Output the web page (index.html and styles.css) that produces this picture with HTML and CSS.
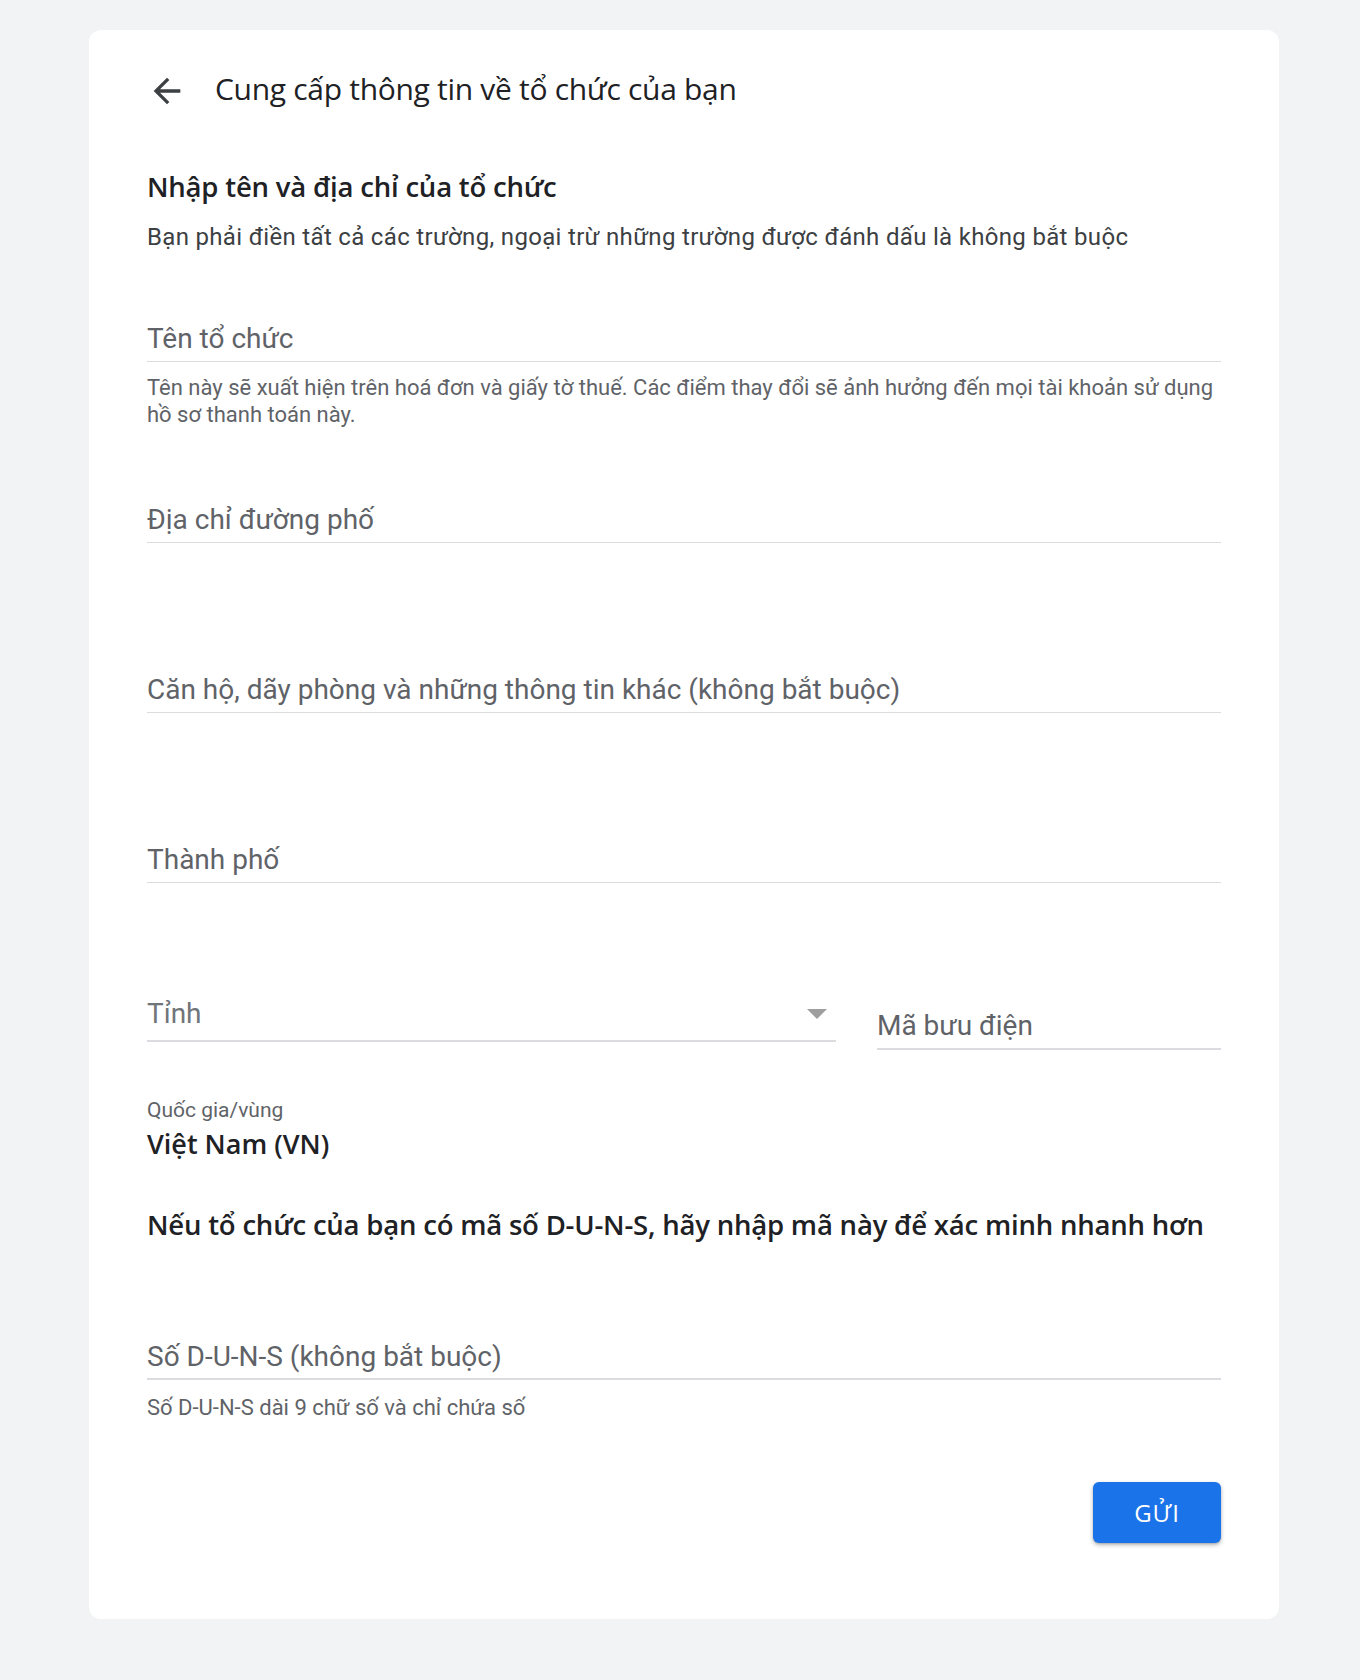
FILE: index.html
```html
<!DOCTYPE html>
<html lang="vi">
<head>
<meta charset="utf-8">
<title>Cung cấp thông tin về tổ chức của bạn</title>
<link rel="stylesheet" href="styles.css">
</head>
<body>
<main class="card">
  <header class="header">
    <button class="back" type="button" aria-label="Quay lại">
      <svg viewBox="0 0 24 24" width="40" height="40"><path d="M20 11H7.83l5.59-5.59L12 4l-8 8 8 8 1.41-1.41L7.83 13H20v-2z" fill="#3c4043"/></svg>
    </button>
    <h1 class="title">Cung cấp thông tin về tổ chức của bạn</h1>
  </header>

  <h2 class="section-title">Nhập tên và địa chỉ của tổ chức</h2>
  <p class="section-desc">Bạn phải điền tất cả các trường, ngoại trừ những trường được đánh dấu là không bắt buộc</p>

  <div class="field field-org">
    <div class="field-label">Tên tổ chức</div>
  </div>
  <p class="helper helper-org">Tên này sẽ xuất hiện trên hoá đơn và giấy tờ thuế. Các điểm thay đổi sẽ ảnh hưởng đến mọi tài khoản sử dụng hồ sơ thanh toán này.</p>

  <div class="field field-street">
    <div class="field-label">Địa chỉ đường phố</div>
  </div>

  <div class="field field-apt">
    <div class="field-label">Căn hộ, dãy phòng và những thông tin khác (không bắt buộc)</div>
  </div>

  <div class="field field-city">
    <div class="field-label">Thành phố</div>
  </div>

  <div class="row">
    <div class="field field-select">
      <div class="field-label field-label-select">Tỉnh</div>
      <span class="caret"></span>
    </div>
    <div class="field field-zip">
      <div class="field-label">Mã bưu điện</div>
    </div>
  </div>

  <div class="country">
    <div class="country-label">Quốc gia/vùng</div>
    <div class="country-value">Việt Nam (VN)</div>
  </div>

  <h2 class="duns-title">Nếu tổ chức của bạn có mã số D-U-N-S, hãy nhập mã này để xác minh nhanh hơn</h2>

  <div class="field field-duns">
    <div class="field-label">Số D-U-N-S (không bắt buộc)</div>
  </div>
  <p class="helper helper-duns">Số D-U-N-S dài 9 chữ số và chỉ chứa số</p>

  <div class="actions">
    <button class="submit" type="button">GỬI</button>
  </div>
</main>
</body>
</html>
```

FILE: styles.css
```css
* { box-sizing: border-box; }

html, body {
  margin: 0;
  padding: 0;
}

body {
  background: #f1f3f4;
  font-family: Roboto, "Liberation Sans", Arial, sans-serif;
  color: #202124;
  padding: 30px 0 40px;
}

.card {
  width: 1190px;
  margin-left: 89px;
  background: #ffffff;
  border-radius: 12px;
  padding: 41px 58px 76px;
}

.header {
  display: flex;
  align-items: center;
  height: 40px;
}

.back {
  width: 40px;
  height: 40px;
  padding: 0;
  margin: 0;
  border: 0;
  background: transparent;
  display: flex;
  align-items: center;
  justify-content: center;
  cursor: pointer;
}

.back svg { display: block; }

.title {
  margin: 0 0 0 28px;
  padding-bottom: 4px;
  font-family: "Open Sans", Roboto, sans-serif;
  font-weight: 400;
  font-size: 30px;
  line-height: 40px;
  color: #202124;
  letter-spacing: -0.3px;
}

.section-title,
.duns-title {
  font-family: "Open Sans", Roboto, sans-serif;
  font-weight: 600;
  font-size: 27.5px;
  line-height: 32px;
  color: #202124;
  letter-spacing: -0.2px;
}

.section-title { margin: 60px 0 0; }

.section-desc {
  margin: 20px 0 0;
  font-size: 24px;
  line-height: 28px;
  color: #3c4043;
  letter-spacing: 0.32px;
}

.field {
  border-bottom: 1px solid #dadce0;
  padding-bottom: 6px;
}

.field-label {
  font-size: 28px;
  line-height: 32px;
  color: #5f6368;
}

.field-label-select { color: #70757a; }

.field-org { margin-top: 72px; }
.field-street { margin-top: 76px; }
.field-apt { margin-top: 131px; }
.field-city { margin-top: 131px; }

.helper {
  margin: 12px 0 0;
  font-size: 22px;
  line-height: 27px;
  color: #5f6368;
}

.row {
  display: flex;
  align-items: flex-start;
  gap: 41px;
  margin-top: 115px;
}

.field-select {
  position: relative;
  flex: 0 0 689px;
  border-bottom-width: 2px;
  padding-bottom: 10px;
}

.caret {
  position: absolute;
  right: 9px;
  top: 11px;
  width: 0;
  height: 0;
  border-left: 10px solid transparent;
  border-right: 10px solid transparent;
  border-top: 10px solid #9e9e9e;
}

.field-zip {
  flex: 1 1 auto;
  margin-top: 12px;
  border-bottom-width: 2px;
}

.country { margin-top: 48px; }

.country-label {
  font-size: 21px;
  line-height: 24px;
  color: #5f6368;
}

.country-value {
  margin-top: 6px;
  font-family: "Open Sans", Roboto, sans-serif;
  font-weight: 600;
  font-size: 27px;
  line-height: 32px;
  color: #202124;
}

.duns-title { margin: 49px 0 0; }

.field-duns {
  margin-top: 100px;
  border-bottom-width: 2px;
  padding-bottom: 5px;
}

.helper-duns { margin-top: 14px; }

.actions {
  display: flex;
  justify-content: flex-end;
  margin-top: 61px;
}

.submit {
  width: 128px;
  height: 61px;
  border: 0;
  border-radius: 6px;
  background: #1a73e8;
  color: #ffffff;
  font-family: "Open Sans", Roboto, sans-serif;
  font-weight: 500;
  font-size: 24px;
  letter-spacing: 1px;
  box-shadow: 0 2px 4px rgba(60, 64, 67, 0.35), 0 1px 2px rgba(60, 64, 67, 0.2);
  cursor: pointer;
}
```
